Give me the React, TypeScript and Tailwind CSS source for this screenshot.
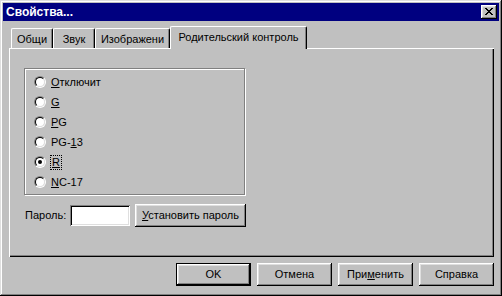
import React from "react";

// win95 bevels
const raised =
  "shadow-[inset_-1px_-1px_#000,inset_1px_1px_#dfdfdf,inset_-2px_-2px_#808080,inset_2px_2px_#fff]";
const button =
  "shadow-[inset_-1px_-1px_#000,inset_1px_1px_#fff,inset_-2px_-2px_#808080,inset_2px_2px_#dfdfdf]";
const sunken =
  "shadow-[inset_1px_1px_#808080,inset_-1px_-1px_#fff,inset_2px_2px_#000,inset_-2px_-2px_#dfdfdf]";

function Radio({ checked, focus, children }: { checked?: boolean; focus?: boolean; children: React.ReactNode }) {
  return (
    <div className="flex items-center h-[20px]">
      <span className="w-[12px] h-[12px] rounded-full border border-t-[#808080] border-l-[#808080] border-r-white border-b-white">
        <span className="flex items-center justify-center w-full h-full rounded-full border border-t-black border-l-black border-r-[#dfdfdf] border-b-[#dfdfdf] bg-white">
          {checked && <span className="w-[4px] h-[4px] rounded-full bg-black" />}
        </span>
      </span>
      <span className={focus ? "ml-[4px] px-[1px] border border-dotted border-black leading-[13px]" : "ml-[5px]"}>
        {children}
      </span>
    </div>
  );
}

function Tab({ label, w }: { label: string; w: string }) {
  return (
    <div
      className={`${w} h-[20px] flex items-center justify-center pt-[2px] border-l border-t border-r border-white border-r-black rounded-t-[2px] shadow-[inset_-1px_0_#808080] whitespace-nowrap overflow-hidden`}
    >
      {label}
    </div>
  );
}

function Btn({ children, primary }: { children: React.ReactNode; primary?: boolean }) {
  return (
    <div className={`w-[75px] h-[23px] ${primary ? "border border-black" : ""}`}>
      <div className={`w-full h-full flex items-center justify-center ${button}`}>{children}</div>
    </div>
  );
}

export default function App() {
  return (
    <div
      className={`w-[502px] h-[296px] bg-[#c0c0c0] p-[3px] flex flex-col text-black text-[11px] font-['Liberation_Sans',Arial,sans-serif] ${raised}`}
    >
      <div className="h-[18px] bg-[#000080] flex items-center justify-between pl-[3px] pr-[2px]">
        <span className="text-white font-bold text-[12px]">Свойства...</span>
        <div className={`w-[16px] h-[14px] bg-[#c0c0c0] flex items-center justify-center ${button}`}>
          <svg width="8" height="7" viewBox="0 0 8 7" shapeRendering="crispEdges" className="-mt-px">
            <path
              d="M0 0h2v1H0zM6 0h2v1H6zM1 1h2v1H1zM5 1h2v1H5zM2 2h4v1H2zM3 3h2v1H3zM2 4h4v1H2zM1 5h2v1H1zM5 5h2v1H5zM0 6h2v1H0zM6 6h2v1H6z"
              fill="#000"
            />
          </svg>
        </div>
      </div>

      <div className="flex flex-col pl-[6px] pt-[5px]">
        <div className="flex items-end h-[22px] pl-[2px]">
          <Tab label="Общи" w="w-[42px]" />
          <Tab label="Звук" w="w-[42px]" />
          <Tab label="Изображени" w="w-[75px]" />
          <div className="relative z-10 w-[137px] h-[23px] -mb-px bg-[#c0c0c0] flex items-center justify-center pb-[1px] border-l border-t border-r border-white border-r-black rounded-t-[2px] shadow-[inset_-1px_0_#808080] whitespace-nowrap">
            Родительский контроль
          </div>
        </div>

        <div className="w-[485px] h-[209px] flex flex-col pl-[15px] pt-[20px] shadow-[inset_1px_1px_#fff,inset_-1px_-1px_#000,inset_-2px_-2px_#808080]">
          <div className="w-[221px] h-[127px] border border-[#808080] shadow-[inset_1px_1px_#fff,1px_1px_#fff] pl-[9px] pt-[3px]">
            <Radio>
              <u>О</u>тключит
            </Radio>
            <Radio>
              <u>G</u>
            </Radio>
            <Radio>
              <u>P</u>G
            </Radio>
            <Radio>
              PG-<u>1</u>3
            </Radio>
            <Radio checked focus>
              <u>R</u>
            </Radio>
            <Radio>
              <u>N</u>C-17
            </Radio>
          </div>

          <div className="flex items-center h-[23px] mt-[9px]">
            <span className="w-[46px] pl-[1px]">Пароль:</span>
            <div className={`w-[60px] h-[21px] bg-white ${sunken}`} />
            <div className={`ml-[5px] w-[111px] h-[23px] flex items-center justify-center ${button}`}>
              <span>
                <u>У</u>становить пароль
              </span>
            </div>
          </div>
        </div>

        <div className="flex justify-end gap-[6px] pr-[5px] mt-[6px]">
          <Btn primary>OK</Btn>
          <Btn>Отмена</Btn>
          <Btn>
            <span>
              При<u>м</u>енить
            </span>
          </Btn>
          <Btn>Справка</Btn>
        </div>
      </div>
    </div>
  );
}
